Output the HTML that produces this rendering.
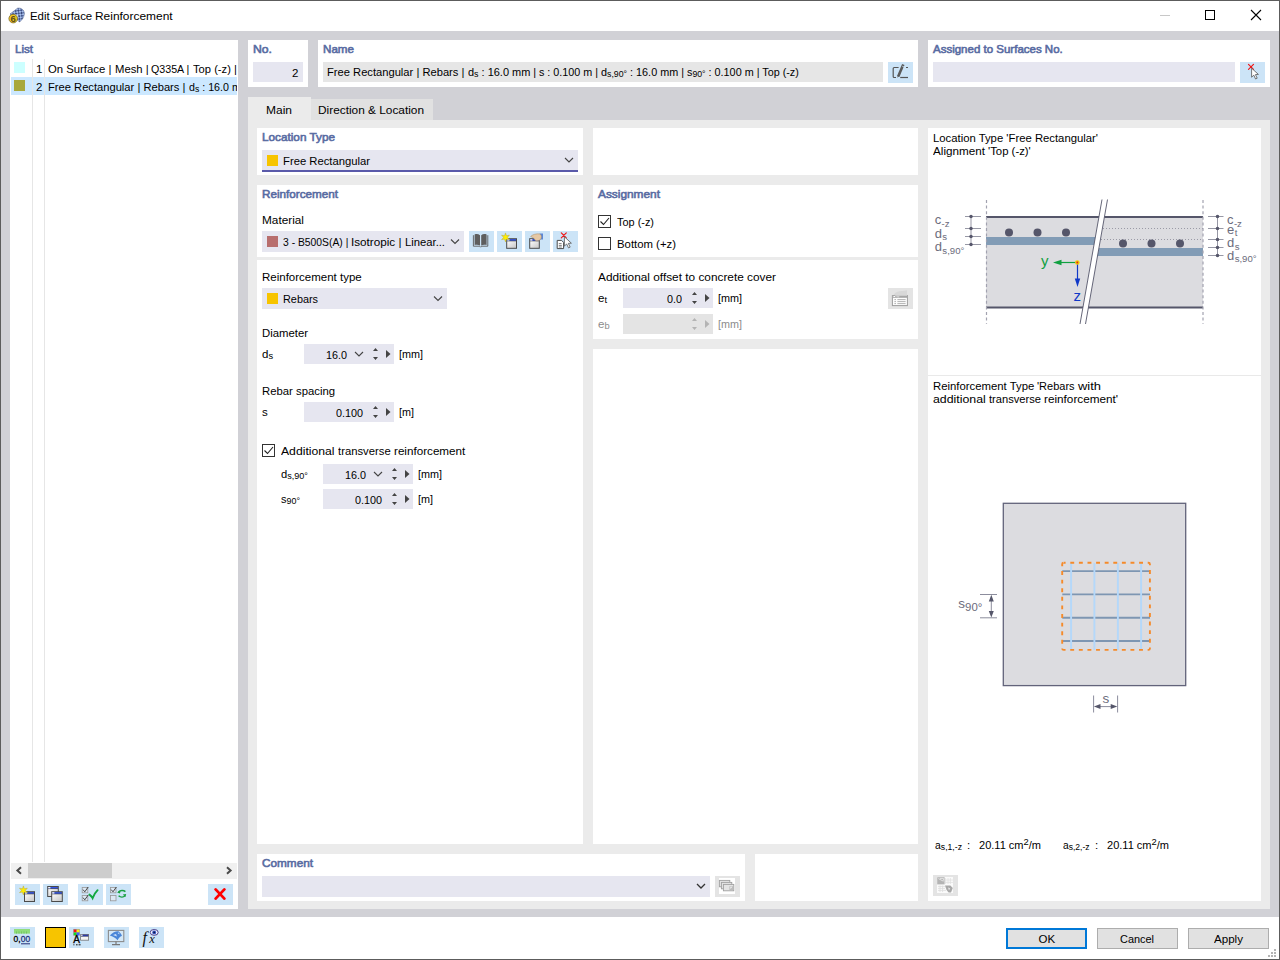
<!DOCTYPE html>
<html><head><meta charset="utf-8"><title>Edit Surface Reinforcement</title>
<style>
*{box-sizing:border-box;margin:0;padding:0}
html,body{width:1280px;height:960px;overflow:hidden;background:#fff}
body{font-family:"Liberation Sans",sans-serif;font-size:11.5px;color:#000;position:relative}
.a{position:absolute}
.t{position:absolute;white-space:pre;line-height:14px;height:14px}
.t>span{display:inline-block;transform-origin:0 50%}
.h{color:#586ba2;-webkit-text-stroke:0.6px #586ba2}
.w{background:#fff}
.in{background:#e6e6f0}
.bb{background:#cce4f7}
.gb{background:#e4e4e4}
.g{color:#8c8c8c}
sub{font-size:9.3px;vertical-align:baseline;position:relative;top:0.9px;line-height:0}
sup{font-size:8.6px;vertical-align:baseline;position:relative;top:-4px;line-height:0}
sub.b{font-size:9.6px;top:1px}
sup.b{font-size:9.8px;top:-3.6px}
svg{position:absolute;overflow:visible}
</style></head><body>
<!-- window frame -->
<div class="a" style="left:0;top:0;width:1280px;height:960px;border:1px solid #5c5c5c"></div>
<div class="a" style="left:1px;top:31px;width:1278px;height:886px;background:#d1d1d6"></div>
<!-- list panel -->
<div class="a w" style="left:10px;top:40px;width:228px;height:869px"></div>
<!-- top panels -->
<div class="a w" style="left:248px;top:40px;width:60px;height:47px"></div>
<div class="a w" style="left:318px;top:40px;width:600px;height:47px"></div>
<div class="a w" style="left:928px;top:40px;width:342px;height:47px"></div>
<!-- tabs -->
<div class="a" style="left:248px;top:97px;width:63px;height:24px;background:#ebebeb"></div>
<div class="a" style="left:311px;top:99px;width:122px;height:21px;background:#e1e1e1"></div>
<div class="a" style="left:248px;top:120px;width:1022px;height:789px;background:#ebebeb"></div>
<!-- inner panels -->
<div class="a w" style="left:257px;top:128px;width:326px;height:47px"></div>
<div class="a w" style="left:593px;top:128px;width:325px;height:47px"></div>
<div class="a w" style="left:257px;top:185px;width:326px;height:72px"></div>
<div class="a w" style="left:593px;top:185px;width:325px;height:72px"></div>
<div class="a w" style="left:257px;top:260px;width:326px;height:584px"></div>
<div class="a w" style="left:593px;top:260px;width:325px;height:79px"></div>
<div class="a w" style="left:593px;top:349px;width:325px;height:495px"></div>
<div class="a w" style="left:257px;top:854px;width:488px;height:47px"></div>
<div class="a w" style="left:755px;top:854px;width:163px;height:47px"></div>
<div class="a w" style="left:928px;top:128px;width:333px;height:773px"></div>
<div class="a" style="left:928px;top:375px;width:333px;height:1px;background:#e9e9e9"></div>
<!-- list contents -->
<div class="a" style="left:11px;top:77px;width:226px;height:18px;background:#cce8ff"></div>
<div class="a" style="left:14px;top:62px;width:11px;height:11px;background:#ccffff"></div>
<div class="a" style="left:14px;top:80px;width:11px;height:11px;background:#a8a83c"></div>
<div class="a" style="left:32px;top:59px;width:1px;height:803px;background:#e6e6e6"></div>
<div class="a" style="left:44px;top:59px;width:1px;height:803px;background:#e6e6e6"></div>
<!-- scrollbar -->
<div class="a" style="left:11px;top:863px;width:226px;height:16px;background:#f0f0f0"></div>
<div class="a" style="left:28px;top:863px;width:84px;height:15px;background:#cdcdcd"></div>
<svg style="left:0;top:0" width="240" height="960"><path d="M21 867.3 L17.4 870.5 L21 873.7 M227 867.3 L230.6 870.5 L227 873.7" fill="none" stroke="#4a4a4a" stroke-width="2"/></svg>
<!-- list buttons -->
<div class="a bb" style="left:15px;top:884px;width:25px;height:21px"></div>
<div class="a bb" style="left:43px;top:884px;width:25px;height:21px"></div>
<div class="a bb" style="left:78px;top:884px;width:25px;height:21px"></div>
<div class="a bb" style="left:106px;top:884px;width:25px;height:21px"></div>
<div class="a bb" style="left:208px;top:884px;width:25px;height:21px"></div>
<!-- bottom toolbar buttons -->
<div class="a bb" style="left:10px;top:927px;width:25px;height:21px"></div>
<div class="a" style="left:45px;top:927px;width:21px;height:21px;background:#f7c400;border:1px solid #000"></div>
<div class="a bb" style="left:69px;top:927px;width:25px;height:21px"></div>
<div class="a bb" style="left:104px;top:927px;width:25px;height:21px"></div>
<div class="a bb" style="left:139px;top:927px;width:25px;height:21px"></div>
<!-- dialog buttons -->
<div class="a" style="left:1006px;top:928px;width:81px;height:21px;background:#e1e1e1;border:2px solid #0078d7"></div>
<div class="a" style="left:1097px;top:928px;width:81px;height:21px;background:#e1e1e1;border:1px solid #adadad"></div>
<div class="a" style="left:1188px;top:928px;width:81px;height:21px;background:#e1e1e1;border:1px solid #adadad"></div>
<!-- top inputs -->
<div class="a in" style="left:253px;top:62px;width:50px;height:20px"></div>
<div class="a" style="left:323px;top:62px;width:560px;height:20px;background:#e6e6e6"></div>
<div class="a bb" style="left:888px;top:62px;width:25px;height:21px"></div>
<div class="a in" style="left:933px;top:62px;width:302px;height:20px"></div>
<div class="a bb" style="left:1240px;top:62px;width:25px;height:21px"></div>
<!-- location type dropdown -->
<div class="a in" style="left:262px;top:150px;width:316px;height:22px;border-bottom:2px solid #5a5aaa"></div>
<div class="a" style="left:267px;top:155px;width:11px;height:11px;background:#f7c400"></div>
<!-- material dropdown -->
<div class="a in" style="left:262px;top:231px;width:202px;height:21px"></div>
<div class="a" style="left:267px;top:236px;width:11px;height:11px;background:#b86e6e"></div>
<div class="a bb" style="left:469px;top:231px;width:25px;height:21px"></div>
<div class="a bb" style="left:497px;top:231px;width:25px;height:21px"></div>
<div class="a bb" style="left:525px;top:231px;width:25px;height:21px"></div>
<div class="a bb" style="left:553px;top:231px;width:25px;height:21px"></div>
<!-- reinforcement type -->
<div class="a in" style="left:262px;top:288px;width:185px;height:21px"></div>
<div class="a" style="left:267px;top:293px;width:11px;height:11px;background:#f7c400"></div>
<!-- numeric inputs -->
<div class="a in" style="left:304px;top:344px;width:90px;height:20px"></div>
<div class="a in" style="left:304px;top:402px;width:90px;height:20px"></div>
<div class="a in" style="left:323px;top:464px;width:90px;height:20px"></div>
<div class="a in" style="left:323px;top:489px;width:90px;height:20px"></div>
<div class="a in" style="left:623px;top:288px;width:90px;height:20px"></div>
<div class="a" style="left:623px;top:314px;width:90px;height:20px;background:#e4e4e4"></div>
<div class="a gb" style="left:888px;top:288px;width:25px;height:21px"></div>
<!-- comment -->
<div class="a in" style="left:262px;top:876px;width:448px;height:21px"></div>
<div class="a gb" style="left:715px;top:876px;width:25px;height:21px"></div>
<div class="a gb" style="left:933px;top:875px;width:25px;height:21px"></div>
<!-- checkboxes -->
<div class="a" style="left:598px;top:215px;width:13px;height:13px;border:1px solid #333;background:#fff"></div>
<div class="a" style="left:598px;top:237px;width:13px;height:13px;border:1px solid #333;background:#fff"></div>
<div class="a" style="left:262px;top:444px;width:13px;height:13px;border:1px solid #333;background:#fff"></div>
<svg style="left:0;top:0" width="1280" height="960">
<g fill="none" stroke="#222" stroke-width="1.1">
<path d="M600.5 221.5 L603.5 224.5 L609 218"/>
<path d="M264.5 450.5 L267.5 453.5 L273 447"/>
</g>
<!-- chevrons -->
<g fill="none" stroke="#444" stroke-width="1.1">
<path d="M565 158 L569 162 L573 158"/>
<path d="M451 239.5 L455 243.5 L459 239.5"/>
<path d="M434 296.5 L438 300.5 L442 296.5"/>
<path d="M355 352 L359 356 L363 352"/>
<path d="M374 472 L378 476 L382 472"/>
<path d="M697 884 L701 888 L705 884" stroke="#333" stroke-width="1.3"/>
</g>
<!-- spinners: up/down small triangles + right triangle -->
<g fill="#444">
<path d="M373.0 351 L375.5 348 L378.0 351Z M373.0 357 L375.5 360 L378.0 357Z M386.0 350 L390.5 354 L386.0 358Z"/>
<path d="M373.0 409 L375.5 406 L378.0 409Z M373.0 415 L375.5 418 L378.0 415Z M386.0 408 L390.5 412 L386.0 416Z"/>
<path d="M392.0 471 L394.5 468 L397.0 471Z M392.0 477 L394.5 480 L397.0 477Z M405.0 470 L409.5 474 L405.0 478Z"/>
<path d="M392.0 496 L394.5 493 L397.0 496Z M392.0 502 L394.5 505 L397.0 502Z M405.0 495 L409.5 499 L405.0 503Z"/>
<path d="M692.0 295 L694.5 292 L697.0 295Z M692.0 301 L694.5 304 L697.0 301Z M705.0 294 L709.5 298 L705.0 302Z"/>
</g>
<g fill="#b4b4b4">
<path d="M692.0 321 L694.5 318 L697.0 321Z M692.0 327 L694.5 330 L697.0 327Z M705.0 320 L709.5 324 L705.0 328Z"/>
</g>
<!-- title bar buttons -->
<path d="M1160 15.5 H1170" stroke="#c8c8c8" stroke-width="1" fill="none"/>
<rect x="1205.5" y="10.5" width="9" height="9" fill="none" stroke="#000" stroke-width="1"/>
<path d="M1251 10 L1261 20 M1261 10 L1251 20" stroke="#000" stroke-width="1.1" fill="none"/>
<!-- resize grip -->
<g fill="#b4b4b4"><rect x="1274" y="949" width="2" height="2"/><rect x="1271" y="952" width="2" height="2"/><rect x="1274" y="952" width="2" height="2"/><rect x="1268" y="955" width="2" height="2"/><rect x="1271" y="955" width="2" height="2"/><rect x="1274" y="955" width="2" height="2"/></g>
</svg>
<!-- icons -->
<svg style="left:0;top:0" width="1280" height="960" font-family="'Liberation Sans',sans-serif">
<defs><linearGradient id="wg" x1="0" y1="0" x2="1" y2="1"><stop offset="0" stop-color="#fafafa"/><stop offset="1" stop-color="#c8c8c8"/></linearGradient><pattern id="ck" width="4" height="4" patternUnits="userSpaceOnUse" patternTransform="rotate(38)"><rect width="4" height="4" fill="#a8c0ee"/><rect width="2" height="2" fill="#3a4a7c"/><rect x="2" y="2" width="2" height="2" fill="#46588e"/></pattern></defs>
<path d="M10 14 L17.5 8.2 C21 7.4 24.4 10 24.4 13.6 C24.2 17 22 20.5 19.4 22 L15.8 18.4 Z" fill="url(#ck)" stroke="#55648c" stroke-width="0.5"/>
<path d="M15 13.8 L18.6 16.2 L16.4 17.4 Z" fill="#e8f0ff"/>
<circle cx="13.2" cy="18.6" r="4.3" fill="#f2c81e" stroke="#6a5a28" stroke-width="0.7"/>
<text x="10.6" y="22.2" font-size="9.5" font-weight="bold" fill="#5a4a20" style="font-family:'Liberation Sans',sans-serif">6</text>
<path d="M898.6 67.5 H894.2 Q893.2 67.5 893.2 68.5 V76.5 Q893.2 77.5 894.2 77.5 H896" fill="none" stroke="#555" stroke-width="1.2"/>
<path d="M900.2 77.5 H908" stroke="#555" stroke-width="1.2" fill="none"/><path d="M906 67.5 H908" stroke="#555" stroke-width="1.2" fill="none"/>
<path d="M903.3 64.6 L898.2 76.4" stroke="#5a5a5a" stroke-width="2.6" fill="none"/><path d="M902.2 66.2 L904.2 67" stroke="#cce4f7" stroke-width="0.8"/><path d="M897.3 77.8 L898 75 L899.6 75.8 Z" fill="#555"/>
<path d="M1248.5 64.3 L1253.5 69.3 M1253.5 64.3 L1248.5 69.3" stroke="#f01818" stroke-width="1.2" stroke-linecap="round" fill="none"/>
<polygon points="1251.60,68.20 1251.60,77.20 1253.80,75.20 1255.60,79.00 1257.20,78.20 1255.40,74.60 1258.40,74.40" fill="#fff" stroke="#555" stroke-width="0.8"/>
<path d="M473.4 235.2 V246.2 H479.6 L480.6 247.2 L481.6 246.2 H487.8 V235.2" fill="none" stroke="#5a5a5a" stroke-width="0.9"/>
<path d="M474.6 234.4 C476.6 233.6 478.6 234 480 235.2 V245.6 C478.6 244.6 476.6 244.4 474.6 245 Z M486.6 234.4 C484.6 233.6 482.6 234 481.2 235.2 V245.6 C482.6 244.6 484.6 244.4 486.6 245 Z" fill="#5e5e5e"/>
<rect x="506.2" y="238.2" width="10.8" height="10.6" fill="#4a4a4a"/><rect x="507.2" y="239.2" width="8.8" height="1.4" fill="#3355e8"/><rect x="507.2" y="239.2" width="2.2" height="1.4" fill="#f4f4f4"/><rect x="507.2" y="241.29999999999998" width="8.8" height="6.499999999999999" fill="url(#wg)"/>
<polygon points="505.50,232.90 506.45,235.75 509.40,235.15 507.40,237.40 509.40,239.65 506.45,239.05 505.50,241.90 504.55,239.05 501.60,239.65 503.60,237.40 501.60,235.15 504.55,235.75" fill="#ffee00" stroke="#b8a838" stroke-width="0.5"/>
<rect x="529.2" y="238.2" width="10.6" height="10.6" fill="#4a4a4a"/><rect x="530.2" y="239.2" width="8.6" height="1.4" fill="#3355e8"/><rect x="530.2" y="239.2" width="2.2" height="1.4" fill="#f4f4f4"/><rect x="530.2" y="241.29999999999998" width="8.6" height="6.499999999999999" fill="url(#wg)"/>
<path d="M539.6 233.4 H543 V239.4 H540 Z" fill="#5b86d6"/><path d="M530.6 236.6 C532.6 234.4 536.4 233.4 540 234 C541.8 235.2 541.8 238 540.4 239.6 C538.6 241 536.4 241.2 535.2 240.2 L533.4 237.8 Z" fill="#e6c8a4" stroke="#a08868" stroke-width="0.5"/>
<path d="M557.2 240.4 H561.6 L563.6 242.4 V248.6 H557.2 Z" fill="#fff" stroke="#4a4a4a" stroke-width="1"/><path d="M558.8 243.6 H561.6 M558.8 245.4 H561.8 M558.8 247 H561.8" stroke="#4a4a4a" stroke-width="0.7"/>
<path d="M561.3 232.9 L566.3 237.9 M566.3 232.9 L561.3 237.9" stroke="#f01818" stroke-width="1.2" stroke-linecap="round" fill="none"/>
<polygon points="564.40,236.80 564.40,246.07 566.67,244.01 568.52,247.92 570.17,247.10 568.31,243.39 571.40,243.19" fill="#fff" stroke="#555" stroke-width="0.8"/>
<g opacity="0.95"><rect x="892.4" y="295.6" width="15" height="10" fill="#fff" stroke="#9a9a9a" stroke-width="1"/><rect x="892" y="295.2" width="15.8" height="2.6" fill="#a4a4a4"/><rect x="893.4" y="296" width="1.8" height="1" fill="#fff"/><path d="M894.4 299.6 H896 M897.4 299.6 H905.6 M894.4 301.6 H896 M897.4 301.6 H905.6 M894.4 303.6 H896 M897.4 303.6 H905.6" stroke="#a8a8a8" stroke-width="0.9"/><path d="M893.6 294.6 C896 291.6 900 290.6 903.4 291 L907 290.2 V296 H899.6 L898.4 298 Z" fill="#d4d4d4" opacity="0.8"/></g>
<rect x="24" y="891.2" width="11" height="10.8" fill="#4a4a4a"/><rect x="25" y="892.2" width="9" height="1.4" fill="#3355e8"/><rect x="25" y="892.2" width="2.2" height="1.4" fill="#f4f4f4"/><rect x="25" y="894.3000000000001" width="9" height="6.7" fill="url(#wg)"/>
<polygon points="23.40,885.90 24.35,888.75 27.30,888.15 25.30,890.40 27.30,892.65 24.35,892.05 23.40,894.90 22.45,892.05 19.50,892.65 21.50,890.40 19.50,888.15 22.45,888.75" fill="#ffee00" stroke="#b8a838" stroke-width="0.5"/>
<rect x="47.2" y="886" width="11.6" height="11" fill="#4a4a4a"/><rect x="48.2" y="887" width="9.6" height="1.4" fill="#3355e8"/><rect x="48.2" y="887" width="2.2" height="1.4" fill="#f4f4f4"/><rect x="48.2" y="889.1" width="9.6" height="6.8999999999999995" fill="url(#wg)"/>
<rect x="51.2" y="891.2" width="11.6" height="10.8" fill="#4a4a4a"/><rect x="52.2" y="892.2" width="9.6" height="1.4" fill="#3355e8"/><rect x="52.2" y="892.2" width="2.2" height="1.4" fill="#f4f4f4"/><rect x="52.2" y="894.3000000000001" width="9.6" height="6.7" fill="url(#wg)"/>
<rect x="82.2" y="887.4" width="5.6" height="5.4" fill="#dce8f4" stroke="#979797" stroke-width="0.8"/><path d="M83.0 889.6 L84.8 891.8 L88.2 887.0" fill="none" stroke="#333" stroke-width="0.9"/>
<rect x="82.2" y="895.4" width="5.6" height="5.4" fill="#dce8f4" stroke="#979797" stroke-width="0.8"/><path d="M83.0 897.6 L84.8 899.8 L88.2 895.0" fill="none" stroke="#333" stroke-width="0.9"/>
<path d="M89.4 894.6 C90.6 895.4 91.8 896.6 92.6 898.2 C93.8 895 95.4 892.4 97.6 890.2" fill="none" stroke="#12a840" stroke-width="1.9" stroke-linecap="round"/>
<rect x="110.4" y="887.4" width="5.6" height="5.4" fill="#dce8f4" stroke="#979797" stroke-width="0.8"/><path d="M111.2 889.6 L113.0 891.8 L116.4 887.0" fill="none" stroke="#333" stroke-width="0.9"/>
<rect x="110.4" y="895.4" width="5.6" height="5.4" fill="#dce8f4" stroke="#979797" stroke-width="0.8"/>
<path d="M118.4 892 C120.4 890 123.6 890 125.4 891.6" fill="none" stroke="#18a040" stroke-width="1.5"/><path d="M117 892.6 L120.6 890.6 L120 893.6 Z" fill="#18a040"/><path d="M118.6 895.8 C120.6 897.6 123.4 897.4 125 895.8" fill="none" stroke="#18a040" stroke-width="1.5"/><path d="M126.2 894 L122.8 894.4 L125.4 897 Z" fill="#18a040"/>
<path d="M215.6 889.4 L224.4 898.6 M224.4 889.4 L215.6 898.6" stroke="#ff0000" stroke-width="2.8" stroke-linecap="round" fill="none"/>
<rect x="14" y="929" width="16" height="4.6" fill="#8fdc7c"/><path d="M16.5 931.4 V933.6 M19 931.4 V933.6 M21.5 931.4 V933.6 M24 931.4 V933.6 M26.5 931.4 V933.6" stroke="#6cc05a" stroke-width="0.8"/>
<text x="13.6" y="942.2" font-size="9.8" fill="#000" stroke="#000" stroke-width="0.3" textLength="7" lengthAdjust="spacingAndGlyphs">0,</text><text x="20.8" y="942.2" font-size="9.8" fill="#22307a" stroke="#22307a" stroke-width="0.3" textLength="9.4" lengthAdjust="spacingAndGlyphs">00</text><path d="M21 943.8 H30" stroke="#22307a" stroke-width="1"/>
<rect x="73.2" y="929" width="6.6" height="6.6" fill="#9a9a9a"/><rect x="73.8" y="929.6" width="2.6" height="2.6" fill="#ff1010"/><rect x="76.8" y="929.6" width="2.6" height="2.6" fill="#ffee10"/><rect x="73.8" y="932.6" width="2.6" height="2.6" fill="#10e020"/><rect x="76.8" y="932.6" width="2.6" height="2.6" fill="#4060ff"/>
<text x="73.2" y="943.2" font-size="10" fill="#000" stroke="#000" stroke-width="0.3">A</text><path d="M73.4 944.8 H74.4 M76 944.8 H77.6 M78.6 944.8 H80.6" stroke="#111" stroke-width="1"/>
<rect x="80.2" y="934" width="8.8" height="6.6" fill="#777"/><rect x="81" y="934.7" width="7.2" height="1.6" fill="#2a3aa8"/><rect x="81" y="934.7" width="1.6" height="1.2" fill="#ddd"/><rect x="81" y="936.8" width="7.2" height="3" fill="#f4f4f4"/>
<rect x="108.4" y="930.4" width="15.4" height="11.2" fill="#d4e8f8" stroke="#8c8c8c" stroke-width="1.1"/><path d="M116 941.6 V944.4 M112 944.6 H120" stroke="#777" stroke-width="1.2"/><path d="M109.8 935.4 C112.6 932.4 116.6 930.8 118.8 931.4 C120.6 933 121.6 934.6 122 935.8 C120 936.6 118.6 938.4 117.6 940.2 C115.4 937.6 112.6 936 109.8 935.4 Z" fill="#4a86d8"/><path d="M113 935 L117 936.6 L116 934 Z M117.6 933 L119.6 934.4 L119 932.6Z" fill="#cfe2fa"/>
<text x="142.6" y="943" font-size="16" font-style="italic" fill="#111" style="font-family:'Liberation Serif',serif">f</text><text x="149.2" y="943.4" font-size="12.5" font-style="italic" fill="#111" style="font-family:'Liberation Serif',serif">x</text>
<ellipse cx="154.2" cy="932.4" rx="4" ry="2.9" fill="#f4f4ff" stroke="#3a2a7a" stroke-width="0.9"/><circle cx="154.2" cy="932.4" r="1.9" fill="#3050c0"/><circle cx="154.2" cy="932.4" r="0.8" fill="#101030"/>
<rect x="719" y="878" width="16" height="16" fill="#fff"/>
<rect x="719.4" y="880.4" width="10.4" height="6.4" fill="#e4e4e4" stroke="#a0a0a0" stroke-width="0.9"/>
<rect x="721.4" y="882.4" width="10.4" height="6.4" fill="#e4e4e4" stroke="#a0a0a0" stroke-width="0.9"/>
<rect x="723.4" y="884.4" width="10.4" height="6.4" fill="#e4e4e4" stroke="#a0a0a0" stroke-width="0.9"/>
<path d="M729.4 886.2 H733 V890 H729.4 Z" fill="#bdbdbd"/><path d="M730.4 886.8 L732 886.8 L730.6 889 Z" fill="#fff"/>
<rect x="937" y="877" width="16" height="16" fill="#fafafa"/><rect x="937.2" y="877.2" width="7.4" height="7.2" fill="#b4b4b4"/><path d="M938.4 878.6 L943.4 881.2 M940 878.4 H943.4 V880.6" stroke="#f0f0f0" stroke-width="0.8" fill="none"/><path d="M945.6 878 V884 M948 878 V884 M950.4 878 V884 M945 880 H953 M945 882.4 H953" stroke="#e0e0e0" stroke-width="0.8"/><path d="M938 886.4 H945 M938 888.4 H945 M938 890.4 H946 M940 885.6 V892 M942.6 885.6 V892" stroke="#dcdcdc" stroke-width="0.8"/><path d="M945 885.6 H950.4 L952.8 888 L951 892.6 H948.6 L946.6 890 Z" fill="#a8a8a8"/><path d="M948 887.6 L950.2 888.2 L949 890.6 Z" fill="#e8e8e8"/>
</svg>
<!-- diagrams -->
<svg style="left:0;top:0" width="1280" height="960" font-family="'Liberation Sans',sans-serif">
<!-- section diagram -->
<rect x="986" y="216" width="217" height="92" fill="#dcdce0"/>
<path d="M986 217 H1203 M986 307.5 H1203" stroke="#55566a" stroke-width="2" fill="none"/>
<!-- dotted lines right -->
<path d="M1103 228.5 H1203 M1101 239.5 H1203" stroke="#9a9aa6" stroke-width="1" stroke-dasharray="1 2" fill="none"/>
<!-- bands -->
<rect x="986" y="237" width="111" height="8" fill="#829cb6"/>
<rect x="1097" y="248" width="106" height="8" fill="#829cb6"/>
<!-- bars -->
<g fill="#55566a">
<circle cx="1009" cy="232.5" r="4"/><circle cx="1037.5" cy="232.5" r="4"/><circle cx="1066" cy="232.5" r="4"/>
<circle cx="1123" cy="243.5" r="4"/><circle cx="1151.5" cy="243.5" r="4"/><circle cx="1180" cy="243.5" r="4"/>
</g>
<!-- break -->
<path d="M1102 199.5 L1107.5 199.5 L1085.5 324 L1080 324 Z" fill="#fff"/>
<path d="M1102 199.5 L1080 324 M1107.5 199.5 L1085.5 324" stroke="#55566a" stroke-width="0.9" fill="none"/>
<!-- dashed verticals -->
<path d="M986.5 200 V324 M1203 200 V324" stroke="#a2a2b0" stroke-width="1.2" stroke-dasharray="3 2.6" fill="none"/>
<!-- left dim -->
<g stroke="#6a6b7e" stroke-width="0.7" fill="none">
<path d="M971 216.5 V244.5 M965 216.5 H981 M965 228.5 H981 M965 236.5 H981 M965 244.5 H981"/>
<path d="M1217.5 216.5 V255.5 M1208 216.5 H1223.5 M1208 228.5 H1223.5 M1208 239.5 H1223.5 M1208 247.5 H1223.5 M1208 255.5 H1223.5"/>
</g>
<g fill="#55566a">
<circle cx="971" cy="216.5" r="1.75"/><circle cx="971" cy="228.5" r="1.75"/><circle cx="971" cy="236.5" r="1.75"/><circle cx="971" cy="244.5" r="1.75"/>
<circle cx="1217.5" cy="216.5" r="1.75"/><circle cx="1217.5" cy="228.5" r="1.75"/><circle cx="1217.5" cy="239.5" r="1.75"/><circle cx="1217.5" cy="247.5" r="1.75"/><circle cx="1217.5" cy="255.5" r="1.75"/>
</g>
<g fill="#6c6c7c" font-size="13">
<text x="934.7" y="224">c<tspan font-size="9.6" dx="0.4" dy="2.6">-z</tspan></text>
<text x="934.7" y="238">d<tspan font-size="9.6" dx="0.4" dy="2.4">s</tspan></text>
<text x="934.7" y="251">d<tspan font-size="9.6" dx="0.4" dy="2.6">s,90°</tspan></text>
<text x="1227" y="224">c<tspan font-size="9.6" dx="0.4" dy="2.6">-z</tspan></text>
<text x="1227" y="234">e<tspan font-size="9.6" dx="0.4" dy="2.4">t</tspan></text>
<text x="1227" y="247.4">d<tspan font-size="9.6" dx="0.4" dy="2.4">s</tspan></text>
<text x="1227" y="259.8">d<tspan font-size="9.6" dx="0.4" dy="2.6">s,90°</tspan></text>
</g>
<!-- axes -->
<path d="M1077 262.5 H1060" stroke="#10a040" stroke-width="1.2" fill="none"/>
<path d="M1053 262.5 L1061.5 259.8 L1061.5 265.2 Z" fill="#10a040"/>
<path d="M1077.5 262.5 V280" stroke="#1038c8" stroke-width="1.2" fill="none"/>
<path d="M1077.5 287 L1074.8 278.5 L1080.2 278.5 Z" fill="#1038c8"/>
<circle cx="1077.3" cy="262.5" r="2.3" fill="#f5c800"/><circle cx="1077.3" cy="262.5" r="0.9" fill="#e02020"/>
<text x="1041" y="266" font-size="15" fill="#10a040">y</text>
<text x="1073.5" y="301" font-size="15" fill="#1038c8">z</text>

<!-- plan diagram -->
<rect x="1003.3" y="503.3" width="182.4" height="182.3" fill="#dcdce0" stroke="#62637a" stroke-width="1.3"/>
<g stroke="#7e96b2" stroke-width="1.9" fill="none">
<path d="M1062.3 571.1 H1150 M1062.3 594.4 H1150 M1062.3 617.7 H1150 M1062.3 641 H1150"/>
</g>
<g stroke="#b4d8fa" stroke-width="1.9" fill="none">
<path d="M1071.1 563 V650 M1094.4 563 V650 M1117.9 563 V650 M1141.1 563 V650"/>
</g>
<rect x="1062.2" y="562.7" width="87.7" height="87.2" rx="1.5" fill="none" stroke="#f58a2a" stroke-width="1.9" stroke-dasharray="3.9 4.7" stroke-dashoffset="2"/>
<!-- s90 dim -->
<g stroke="#66677c" stroke-width="0.75" fill="none">
<path d="M980 594.5 H997 M980 617.8 H997 M991.3 598 V614"/>
<path d="M1093.6 695.5 V712.5 M1117.6 695.5 V712.5 M1097 706.6 H1114"/>
</g>
<g fill="#55566a">
<path d="M991.3 594.8 L988.8 601.4 L993.8 601.4Z M991.3 617.5 L988.8 610.9 L993.8 610.9Z"/>
<path d="M1093.9 706.6 L1100.5 704.1 L1100.5 709.1Z M1117.3 706.6 L1110.7 704.1 L1110.7 709.1Z"/>
</g>
<g fill="#6c6c7c">
<text x="958.3" y="608.2" font-size="13.5">s<tspan font-size="11.4" dy="2.6">90°</tspan></text>
<text x="1102.6" y="702.9" font-size="13.5">s</text>
</g>
</svg>

<!-- texts -->
<div class="t" id="t0" style="left:30px;top:9px;"><span style="transform:scaleX(0.9933)">Edit Surface </span></div>
<div class="t" id="t1" style="left:95.4px;top:9px;"><span style="transform:scaleX(1.0375)">Reinforcement</span></div>
<div class="t h" id="t2" style="left:15px;top:42px;"><span style="transform:scaleX(1.0052)">List</span></div>
<div class="t" id="t3" style="left:36px;top:62px;"><span>1</span></div>
<div class="t" id="t4" style="left:48px;top:62px;width:189px;overflow:hidden;"><span style="transform:scaleX(0.9845)">On Surface | </span></div>
<div class="t" id="t5" style="left:114.5px;top:62px;width:122.5px;overflow:hidden;"><span style="transform:scaleX(0.9800)">Mesh | </span></div>
<div class="t" id="t6" style="left:151.25px;top:62px;width:85.75px;overflow:hidden;"><span style="transform:scaleX(0.9260)">Q335A | </span></div>
<div class="t" id="t7" style="left:192.5px;top:62px;width:44.5px;overflow:hidden;"><span style="transform:scaleX(0.9719)">Top (-z) | </span></div>
<div class="t" id="t8" style="left:36px;top:80px;"><span>2</span></div>
<div class="t" id="t9" style="left:48px;top:80px;width:189px;overflow:hidden;"><span style="transform:scaleX(0.9711)">Free Rectangular | Rebars | </span></div>
<div class="t" id="t10" style="left:188.5px;top:80px;width:48.5px;overflow:hidden;"><span style="transform:scaleX(0.9283)">d<sub>s</sub> : 16.0 mm</span></div>
<div class="t h" id="t11" style="left:253px;top:42px;"><span style="transform:scaleX(1.0611)">No.</span></div>
<div class="t" id="t12" style="left:292px;top:66px;"><span>2</span></div>
<div class="t h" id="t13" style="left:323px;top:42px;"><span style="transform:scaleX(1.0102)">Name</span></div>
<div class="t" id="t14" style="left:327px;top:65px;"><span style="transform:scaleX(0.9711)">Free Rectangular | Rebars | </span></div>
<div class="t" id="t15" style="left:467.5px;top:65px;"><span style="transform:scaleX(0.9530)">d<sub>s</sub> : 16.0 mm | </span></div>
<div class="t" id="t16" style="left:538.75px;top:65px;"><span style="transform:scaleX(0.9356)">s : 0.100 m | </span></div>
<div class="t" id="t17" style="left:600.75px;top:65px;"><span style="transform:scaleX(0.9409)">d<sub>s,90°</sub> : 16.0 mm | </span></div>
<div class="t" id="t18" style="left:686.75px;top:65px;"><span style="transform:scaleX(0.9391)">s<sub>90°</sub> : 0.100 m | Top (-z)</span></div>
<div class="t h" id="t19" style="left:933px;top:42px;"><span>Assigned to Surfaces No.</span></div>
<div class="t" id="t20" style="left:266px;top:103px;"><span style="transform:scaleX(1.0426)">Main</span></div>
<div class="t" id="t21" style="left:318px;top:103px;"><span style="transform:scaleX(1.0299)">Direction &amp; Location</span></div>
<div class="t h" id="t22" style="left:262px;top:130px;"><span style="transform:scaleX(1.0223)">Location Type</span></div>
<div class="t" id="t23" style="left:283px;top:154px;"><span style="transform:scaleX(0.9791)">Free Rectangular</span></div>
<div class="t h" id="t24" style="left:262px;top:187px;"><span style="transform:scaleX(1.0161)">Reinforcement</span></div>
<div class="t" id="t25" style="left:262px;top:213px;"><span style="transform:scaleX(1.0267)">Material</span></div>
<div class="t" id="t26" style="left:283px;top:235px;"><span style="transform:scaleX(0.8997)">3 - B500S(A) | </span></div>
<div class="t" id="t27" style="left:351.25px;top:235px;"><span style="transform:scaleX(1.0171)">Isotropic | </span></div>
<div class="t" id="t28" style="left:405px;top:235px;"><span style="transform:scaleX(0.9775)">Linear...</span></div>
<div class="t h" id="t29" style="left:598px;top:187px;"><span style="transform:scaleX(1.0317)">Assignment</span></div>
<div class="t" id="t30" style="left:617px;top:215px;"><span style="transform:scaleX(0.9491)">Top (-z)</span></div>
<div class="t" id="t31" style="left:617px;top:237px;"><span style="transform:scaleX(0.9872)">Bottom (+z)</span></div>
<div class="t" id="t32" style="left:262px;top:269.5px;"><span>Reinforcement type</span></div>
<div class="t" id="t33" style="left:283px;top:292px;"><span style="transform:scaleX(0.9440)">Rebars</span></div>
<div class="t" id="t34" style="left:262px;top:326px;"><span style="transform:scaleX(0.9859)">Diameter</span></div>
<div class="t" id="t35" style="left:262px;top:347px;"><span>d<sub>s</sub></span></div>
<div class="t" id="t36" style="left:326px;top:347.8px;"><span style="transform:scaleX(0.9379)">16.0</span></div>
<div class="t" id="t37" style="left:399px;top:347px;"><span style="transform:scaleX(0.9389)">[mm]</span></div>
<div class="t" id="t38" style="left:262px;top:384px;"><span style="transform:scaleX(0.9844)">Rebar spacing</span></div>
<div class="t" id="t39" style="left:262px;top:405px;"><span>s</span></div>
<div class="t" id="t40" style="left:336px;top:405.8px;"><span style="transform:scaleX(0.9381)">0.100</span></div>
<div class="t" id="t41" style="left:399px;top:405px;"><span style="transform:scaleX(0.9384)">[m]</span></div>
<div class="t" id="t42" style="left:281px;top:444px;"><span style="transform:scaleX(1.0592)">Additional </span></div>
<div class="t" id="t43" style="left:337.9px;top:444px;"><span style="transform:scaleX(0.9808)">transverse </span></div>
<div class="t" id="t44" style="left:393.7px;top:444px;"><span style="transform:scaleX(1.0140)">reinforcement</span></div>
<div class="t" id="t45" style="left:281px;top:467px;"><span style="transform:scaleX(0.9746)">d<sub>s,90°</sub></span></div>
<div class="t" id="t46" style="left:345px;top:467.8px;"><span style="transform:scaleX(0.9379)">16.0</span></div>
<div class="t" id="t47" style="left:418px;top:467px;"><span style="transform:scaleX(0.9389)">[mm]</span></div>
<div class="t" id="t48" style="left:281px;top:492px;"><span style="transform:scaleX(0.9590)">s<sub>90°</sub></span></div>
<div class="t" id="t49" style="left:355px;top:492.8px;"><span style="transform:scaleX(0.9381)">0.100</span></div>
<div class="t" id="t50" style="left:418px;top:492px;"><span style="transform:scaleX(0.9384)">[m]</span></div>
<div class="t" id="t51" style="left:598px;top:269.5px;"><span style="transform:scaleX(1.0287)">Additional offset to concrete cover</span></div>
<div class="t" id="t52" style="left:598px;top:291px;"><span>e<sub>t</sub></span></div>
<div class="t" id="t53" style="left:667px;top:291.8px;"><span style="transform:scaleX(0.9375)">0.0</span></div>
<div class="t" id="t54" style="left:718px;top:291px;"><span style="transform:scaleX(0.9389)">[mm]</span></div>
<div class="t g" id="t55" style="left:598px;top:317px;"><span>e<sub>b</sub></span></div>
<div class="t g" id="t56" style="left:718px;top:317px;"><span style="transform:scaleX(0.9389)">[mm]</span></div>
<div class="t" id="t57" style="left:933px;top:131px;"><span style="transform:scaleX(0.9831)">Location Type 'Free Rectangular'</span></div>
<div class="t" id="t58" style="left:933px;top:144px;"><span style="transform:scaleX(1.0158)">Alignment </span></div>
<div class="t" id="t59" style="left:988.2px;top:144px;"><span style="transform:scaleX(0.9867)">'Top (-z)'</span></div>
<div class="t" id="t60" style="left:933px;top:379px;"><span style="transform:scaleX(0.9858)">Reinforcement Type </span></div>
<div class="t" id="t61" style="left:1037.4px;top:379px;"><span style="transform:scaleX(0.9560)">'Rebars </span></div>
<div class="t" id="t62" style="left:1078px;top:379px;"><span style="transform:scaleX(1.1245)">with</span></div>
<div class="t" id="t63" style="left:933px;top:392px;"><span style="transform:scaleX(1.0727)">additional </span></div>
<div class="t" id="t64" style="left:989.25px;top:392px;"><span style="transform:scaleX(0.9694)">transverse </span></div>
<div class="t" id="t65" style="left:1044.4px;top:392px;"><span style="transform:scaleX(1.0218)">reinforcement'</span></div>
<div class="t" id="t66" style="left:935px;top:838px;"><span style="transform:scaleX(0.9038)">a<sub class="b">s,1,-z</sub></span></div>
<div class="t" id="t67" style="left:967px;top:838px;"><span>:</span></div>
<div class="t" id="t68" style="left:979px;top:838px;"><span style="transform:scaleX(0.9585)">20.11 cm<sup class="b">2</sup>/m</span></div>
<div class="t" id="t69" style="left:1063.4px;top:838px;"><span style="transform:scaleX(0.8904)">a<sub class="b">s,2,-z</sub></span></div>
<div class="t" id="t70" style="left:1095px;top:838px;"><span>:</span></div>
<div class="t" id="t71" style="left:1107px;top:838px;"><span style="transform:scaleX(0.9585)">20.11 cm<sup class="b">2</sup>/m</span></div>
<div class="t h" id="t72" style="left:262px;top:855.6px;"><span style="transform:scaleX(1.0229)">Comment</span></div>
<div class="t" id="t73" style="left:1038.6px;top:932px;"><span>OK</span></div>
<div class="t" id="t74" style="left:1120px;top:932px;"><span style="transform:scaleX(0.9494)">Cancel</span></div>
<div class="t" id="t75" style="left:1214px;top:932px;"><span style="transform:scaleX(1.0076)">Apply</span></div>
</body></html>
